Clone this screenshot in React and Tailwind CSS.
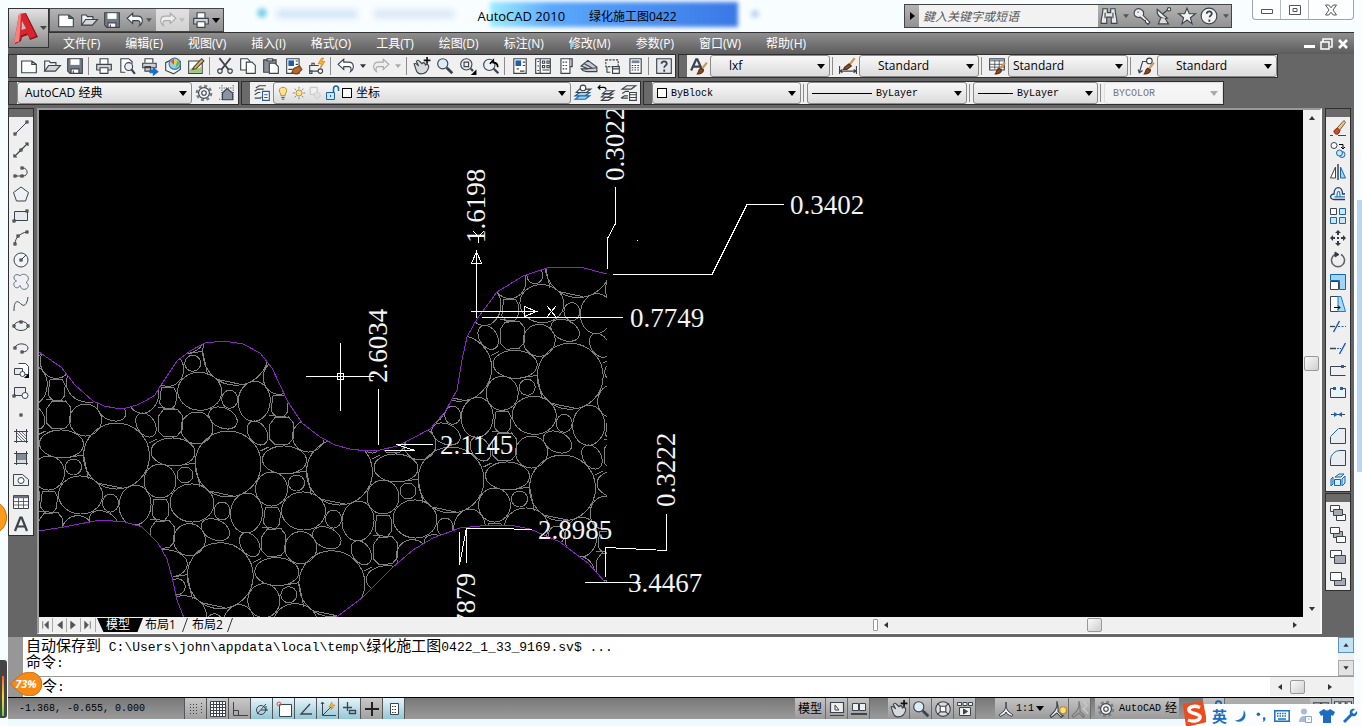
import clsx from 'clsx';

// 16x16 toolbar glyphs
const icons = {
  new: <path d="M1.500 3.500h9l4 3v7.500h-13zM10.500 3.500v3h4" fill="#fff" />,
  open: (
    <>
      <path d="M1.500 12.500v-9h4l1 1.500h5v2.500" fill="#f4f4f4" />
      <path d="M1.500 12.500l3.500-5h10.500l-4.500 5z" fill="#d4d6da" />
    </>
  ),
  save: (
    <>
      <path d="M1.500 1.500h13v13h-11l-2-2z" fill="#737b87" />
      <path d="M4 2h8v5H4z" fill="#fff" stroke="none" />
      <path d="M4.500 10.500h7v4h-7zM6.500 12v2" fill="#fff" />
    </>
  ),
  undo: <path d="M6 2L1 6.500l5 4.500V8.500h4.500c2 0 2.500 2 1.500 4.500 4-3 3-8.500-1.500-8.500H6z" fill="#fff" />,
  redo: <path d="M10 2l5 4.500L10 11V8.500H5.500c-2 0-2.500 2-1.500 4.500C0 10 1 4.500 5.500 4.500H10z" fill="#eee" stroke="#aaa" />,
  print: (
    <>
      <path d="M4.500 6V1.500h7V6" fill="#fff" />
      <path d="M1.500 6.500h13v5h-13z" fill="#cfd1d5" />
      <path d="M4.500 9.500h7v5h-7z" fill="#fff" />
    </>
  ),
  preview: (
    <>
      <path d="M12.500 6V4l-3-2.500h-7v12h4" fill="#fff" />
      <circle cx="9.500" cy="8.500" r="3.500" fill="#e4eef6" />
      <path d="M12 11l3 4" strokeWidth="2" />
    </>
  ),
  plot: (
    <>
      <path d="M3.500 5V1.500h7V5" fill="#fff" />
      <path d="M1.500 5.500h12v4h-12zM3.500 8.500h5v4h-5z" fill="#cfd1d5" />
      <path d="M8 11.500h3v-2l4 3.500-4 3v-2H8z" fill="#1c6fc4" stroke="#1c6fc4" />
    </>
  ),
  globe: (
    <>
      <path d="M1.500 5l6-3 7 2v7l-6 4-7-3z" fill="#f3f3f3" />
      <circle cx="9.500" cy="6" r="5" fill="#8fd0f2" stroke="#2c7dab" />
      <path d="M9 1l-3 3 3 3z" fill="#e24d3a" stroke="none" />
      <path d="M9 7V1.500l3.500 1.500L10 8z" fill="#f6c646" stroke="none" />
      <path d="M12 3l2 3-4 4z" fill="#63b357" stroke="none" />
    </>
  ),
  markup: (
    <>
      <path d="M1.500 3.500h12v11h-12z" fill="#fff" />
      <path d="M2 12c3-5 7 1 11-4v6H2z" fill="#9ec77a" stroke="none" />
      <path d="M6 9l7-7.500 2 2-7 7-3 .5z" fill="#f5b53a" />
    </>
  ),
  cut: (
    <>
      <path d="M3 1l8 10M13 1L5 11" strokeWidth="1.500" />
      <circle cx="3.500" cy="12.500" r="2" />
      <circle cx="12.500" cy="12.500" r="2" />
    </>
  ),
  copyclip: (
    <>
      <path d="M1.500 1.500h6l2 2v8h-8z" fill="#fff" />
      <path d="M6.500 4.500h5l3 3v7h-8z" fill="#fff" />
    </>
  ),
  paste: (
    <>
      <path d="M1.500 2.500h11v11h-11z" fill="#8b8f96" />
      <path d="M4.500 1.500h5v2h-5z" fill="#ddd" />
      <path d="M6.500 5.500h5l3 3v6h-8z" fill="#fff" />
    </>
  ),
  match: (
    <>
      <path d="M1.500 1.500h11v13h-11z" fill="#fff" />
      <path d="M3 3h5v5H3z" fill="#1c5fa8" stroke="none" />
      <path d="M9.500 3.500h2M9.500 6.500h2M3 11h4" />
      <path d="M8 10l5-2 2 3-4 4c-1 0-3 0-5-1z" fill="#b56a2c" stroke="#7a4219" />
    </>
  ),
  block: (
    <>
      <path d="M4.500 7.500h-3v5h8M4.500 7.500h5" />
      <circle cx="11" cy="12.500" r="2" fill="#fff" />
      <path d="M3.500 5.500h2v2h-2zM1.500 12.500h2v2h-2z" fill="#fff" />
      <path d="M12 1l-3 5h3l-1 4 4-6h-3l2-3z" fill="#ffb52e" stroke="#c97a12" strokeWidth=".6" />
    </>
  ),
  pan: (
    <>
      <path d="M1 6c2-1 3 1 4 2L3 4c1-2 2-1 3 0l2 2 1-1c1 0 2 1 2 2 2-1 3 0 3 2-1 4-3 6-7 6-4 0-4-3-6-9z" fill="#d7d9dc" />
      <path d="M12.500 0v6M9.500 3h6" strokeWidth="1.500" stroke="#111" />
    </>
  ),
  zoom: (
    <>
      <circle cx="6" cy="6" r="4.500" fill="#d9ecf8" />
      <path d="M9.500 9.500l5 5" strokeWidth="2.500" />
    </>
  ),
  zoomwin: (
    <>
      <circle cx="6.500" cy="6.500" r="5" fill="#eee" />
      <path d="M4.500 4.500h4v4h-4z" />
      <path d="M10.500 10.500l2 2" strokeWidth="2" />
      <path d="M15.500 11v5h-5z" fill="#000" stroke="none" />
    </>
  ),
  zoomprev: (
    <>
      <circle cx="6.500" cy="7" r="5" fill="#e8f2f8" />
      <path d="M7 6l3-3v2c3 0 4 2 4 4" stroke="#000" strokeWidth="1.500" />
      <path d="M10.500 10.500l4 4" strokeWidth="2" />
    </>
  ),
  props: (
    <>
      <path d="M2.500 1.500h11v13h-11z" fill="#fff" />
      <path d="M4 3h5v5H4z" fill="#1c5fa8" stroke="none" />
      <path d="M10.500 4.500h2M10.500 7.500h2M5 10.500h2M8 12.500h4" />
    </>
  ),
  center: (
    <>
      <path d="M1.500 1.500h13v13h-13zM5.500 1.500v13" fill="#fff" />
      <path d="M7.500 3.500h2v2h-2zM11.500 3.500h2v2h-2zM7.500 7.500h2v2h-2zM11.500 7.500h2v2h-2zM7.500 11.500h6M3 4h1.500M3 8h1.500M3 12h1.500" />
    </>
  ),
  palette: (
    <>
      <path d="M3.500 1.500h8v13h-8z" fill="#fff" />
      <path d="M11.500 1.500h2v7h-2" fill="#bbb" />
      <path d="M5 4.500h5M5 7.500h5M5 10.500h5" strokeDasharray="1.500 1" />
    </>
  ),
  sheet: (
    <>
      <path d="M1 8l6-5 8 6v4H6c-2 0-4-1-5-2.500h6z" fill="#c9ccd1" />
      <path d="M7 10.500l8-1M4 6l7 4" />
    </>
  ),
  cloud: (
    <>
      <path d="M2.500 2.500h11v6h-11z" strokeDasharray="2 1" />
      <path d="M3.500 8.500v5h3" />
      <path d="M8.500 8.500h6v6h-6zM8.500 10.500h6" fill="#fff" />
    </>
  ),
  calc: (
    <>
      <path d="M3.500 1.500h10v13h-10z" fill="#fff" />
      <path d="M5 3h7v2.500H5z" fill="#7b828d" stroke="none" />
      <path d="M5 7.500h7M5 9.500h7M5 11.500h7" strokeDasharray="1.500 1" />
    </>
  ),
  help: (
    <>
      <path d="M1.500 1.500h13v13h-13z" fill="#e3e6ea" />
      <path d="M5.800 6c0-3 4.700-2.500 4.700 0 0 1.500-2.300 1.500-2.300 3.500M8.200 11v2" strokeWidth="1.600" />
    </>
  ),
  textstyle: (
    <>
      <path d="M1 12L5.500 2h1L11 12M3 8.500h6" strokeWidth="2" />
      <Brush />
    </>
  ),
  dimstyle: (
    <>
      <path d="M.5 8v7M15.500 8v7M1 12.500h14M3 11l-2 1.500L3 14M13 11l2 1.500-2 1.500" />
      <path d="M5 9l4-3 2 2-4 3H4z" fill="#8d4a1f" stroke="#5c2e12" />
      <path d="M10 6l4-5" stroke="#c79a5a" strokeWidth="2" />
    </>
  ),
  tablestyle: (
    <>
      <path d="M1.500 1.500h13v10h-13z" fill="#fff" />
      <path d="M2 3h12" strokeWidth="2" stroke="#8a909a" />
      <path d="M1.500 6.500h13M1.500 9h13M6 3v8M10 3v8" strokeWidth=".7" />
      <Brush />
    </>
  ),
  leaderstyle: (
    <>
      <path d="M2 14l3-10h4M1 11l1 3 3-2" />
      <circle cx="11" cy="3.500" r="2.500" fill="#fff" />
      <Brush />
    </>
  ),
  gear: (
    <>
      <circle cx="8" cy="8" r="6.300" strokeDasharray="2.700 2.240" strokeWidth="2.200" stroke="#7c8087" />
      <circle cx="8" cy="8" r="4.800" fill="#f2f2f2" />
      <circle cx="8" cy="8" r="2" fill="#fff" />
    </>
  ),
  workspace: (
    <>
      <path d="M1 3.500h14M1 13.500h14M3.500 1v14M13.500 1v14" strokeDasharray="1 1" />
      <path d="M4 8l4-4 5 4v6H4z" fill="#8895a5" />
    </>
  ),
  layers: (
    <>
      <path d="M2.500 3.500l3-2h6M1.500 6.500l3-2h5M1.500 9.500l3-2h2M1.500 12.500h5l1-1" />
      <path d="M8.500 6.500h6v8h-6zM10 9.500h3M10 12h3" fill="#fff" stroke="#2d5a92" />
    </>
  ),
  bulb: (
    <>
      <path d="M8 1.500c-5 0-5 5-2.500 7.500v2h5V9C13 6.500 13 1.500 8 1.500z" fill="#ffe28a" stroke="#a58a3c" />
      <path d="M6 13h4M6.500 15h3" />
    </>
  ),
  sun: (
    <>
      <circle cx="8" cy="8" r="3.500" fill="#ffe28a" stroke="#a58a3c" />
      <path d="M8 1v2M8 13v2M1 8h2M13 8h2M3 3l1.500 1.500M11.500 11.500L13 13M3 13l1.500-1.500M11.500 4.500L13 3" stroke="#777" />
    </>
  ),
  vpfreeze: (
    <>
      <path d="M2.500 1.500h8v8h-8z" stroke="#bbb" fill="#f0f0f0" />
      <circle cx="10.500" cy="10.500" r="3.500" stroke="#bbb" fill="#e2e2e2" strokeDasharray="2 1" />
    </>
  ),
  unlock: (
    <>
      <path d="M9.500 8V4c0-4 5-4 5 0v2" stroke="#1766ad" strokeWidth="1.500" />
      <path d="M2.500 7.500h8v7h-8z" fill="#cfe6f6" stroke="#1766ad" />
      <path d="M6.500 10v2" stroke="#1766ad" />
    </>
  ),
  laycur: (
    <>
      <path d="M1 13.500l4-3h9l-4 3zM1 10.500l4-3h9l-4 3z" fill="#9fd2f1" stroke="#1766ad" />
      <path d="M2 7.500l3-3h10l-4 3z" fill="#fff" />
      <circle cx="8" cy="3.500" r="2.500" fill="#fff" />
    </>
  ),
  layprev: (
    <>
      <path d="M4 14.500l3-2.500h7l-4 2.500zM4 11.500l3-2.500h7l-4 2.500zM5 8.500l3-2.500h7l-4 2.500z" fill="#f3f3f3" />
      <path d="M1 3h5c2 0 2 1 2 2M3 1L1 3l2 2" stroke="#000" />
    </>
  ),
  laystate: (
    <>
      <path d="M2 4.500l4-3h8l-4 3zM2 8.500l3-2h3M1 12.500l3-2h3M1 12.500h6" />
      <path d="M8.500 7.500h6v7h-6zM8.500 9.500h6M8.500 12h6" fill="#fff" />
    </>
  ),

  // draw
  line: <><path d="M2 14L14 2" /><Grip x="1" y="13" /><Grip x="13" y="1" /></>,
  xline: <><path d="M1 15L15 1M1 12v3h3M12 1h3v3" strokeWidth="1.200" /><Grip x="7" y="7" /></>,
  pline: <><path d="M2 12h8c6 0 5-8 0-8" /><Grip x="1" y="11" /><Grip x="8" y="11" /><Grip x="8" y="3" /></>,
  polygon: <path d="M8 1l7.500 5.500L12.500 15h-9L.5 6.500z" fill="#f0f1f5" />,
  rect: <><path d="M1.500 3.500h13v9h-13z" fill="#e6e8f0" /><Grip x="13" y="2" /><Grip x="0" y="12" /></>,
  arc: <><path d="M2 14c0-6 5-11 12-12" /><Grip x="1" y="13" /><Grip x="4" y="5" /><Grip x="13" y="1" /></>,
  circle: <><circle cx="8" cy="8" r="7" fill="#f2f4f7" /><path d="M8 8l5-5" /><Grip x="7" y="7" /></>,
  revcloud: (
    <path d="M7 2C5-.5.500.5 1 4c.3 2 1.500 2.500 2.500 3C1 8 0 10 1.500 12.500 3 14.500 6 14 7 11.500c1 3.500 3.500 4.500 6 3.500 3-1.500 3-5 0-6.500C15.500 7 16 4 14.500 2 12.500 0 8.500-.5 7 2z" fill="#eef0f6" stroke="#666d78" />
  ),
  spline: <path d="M1 15C1 3 5 5 8 8s6 1 7-7" />,
  ellipse: <><ellipse cx="8" cy="8" rx="7" ry="4.500" fill="#eef0f4" /><Grip x="0" y="7" /><Grip x="14" y="7" /><Grip x="7" y="3" /></>,
  earc: <><path d="M2 8C3 2 15 3 15 8c0 3-3 4-6 4" /><Grip x="1" y="7" /><Grip x="8" y="11" /></>,
  insert: (
    <>
      <path d="M5.500 1.500h7l3 3v8h-6" fill="#fff" />
      <path d="M1.500 6.500h8v6h-8z" fill="#e8eaee" />
      <circle cx="9.500" cy="12" r="2.500" fill="#fff" />
      <path d="M16 11v5h-5z" fill="#000" stroke="none" />
    </>
  ),
  mkblock: <><path d="M1.500 3.500h11v8h-11z" fill="#e8eaee" /><circle cx="12" cy="11.500" r="3" fill="#fff" /><Grip x="0" y="11" /></>,
  point: <Grip x="7" y="8" />,
  hatch: (
    <>
      <path d="M1 3.500h14M1 13.500h14M3.500 1v14M13.500 1v14" />
      <path d="M4 8l5 5M4 5l8 8M6 4l7 7M9 4l4 4" strokeWidth=".7" />
    </>
  ),
  gradient: (
    <>
      <path d="M4 4h9v9H4z" fill="#858b95" stroke="none" />
      <path d="M4 10h9v3H4z" fill="#d7dae0" stroke="none" />
      <path d="M1 3.500h14M1 13.500h14M3.500 1v14M13.500 1v14" />
    </>
  ),
  region: <><path d="M.5 2.500h9l6 5v6H.5z" fill="#eef0f4" /><circle cx="8" cy="8.500" r="3" fill="#fff" /></>,
  table: (
    <>
      <path d="M.5 1.500h15v13H.5z" fill="#fff" />
      <path d="M1 3h14" strokeWidth="2.500" stroke="#6a717c" />
      <path d="M.5 7.500h15M.5 11h15M5.500 4v10M10.500 4v10" strokeWidth=".8" />
    </>
  ),
  mtext: <path d="M2 15L7.300 1.500h1.400L14 15M4 10.500h8" strokeWidth="2.200" />,

  // modify
  erase: (
    <>
      <path d="M0 15.500h3M8 15.500h8" />
      <path d="M7 8l7-7.500 1.500 2L9 11z" fill="#e9c991" stroke="#7b5a2b" />
      <path d="M4.500 10l3-2 2.500 2.500-1 2.500c-2 3-6.500 0-4.500-3z" fill="#c94a2d" stroke="#8b2c17" />
    </>
  ),
  copy: (
    <>
      <circle cx="4" cy="3.500" r="3" fill="#fff" />
      <path d="M9 2.500h4v4M11 5l2 2 2-2" stroke="#000" />
      <circle cx="12" cy="12.500" r="3" fill="#cbe8fa" stroke="#1766ad" />
      <circle cx="9.500" cy="11" r="3" fill="#cbe8fa" stroke="#1766ad" />
    </>
  ),
  mirror: (
    <>
      <path d="M5.500 3v11h-5z" fill="#fff" />
      <path d="M10.500 3v11h5z" fill="#9fd6f7" stroke="#1766ad" />
      <path d="M8 0v16" strokeWidth="1.500" />
    </>
  ),
  offset: (
    <>
      <path d="M15 13.500H4c-4.500 0-4.500-5.500 0-5.500C4-.5 12.500-.5 12.500 8H15" stroke="#1b3f6b" strokeWidth="1.300" />
      <path d="M15 10.800H4.500M7 10.500c0-7 3-7 3 0" stroke="#1f7cc6" strokeWidth="1.200" />
    </>
  ),
  array: (
    <>
      <path d="M.5.5h6v6h-6z" fill="#fff" />
      <path d="M9.500.5h6v6h-6zM.5 9.500h6v6h-6zM9.500 9.500h6v6h-6z" fill="#cbe8fa" stroke="#1766ad" />
    </>
  ),
  move: (
    <path d="M8 0l3 3H9v2H7V3H5zM8 16l3-3H9v-2H7v2H5zM0 8l3-3v2h2v2H3v2zM16 8l-3-3v2h-2v2h2v2zM7 7h2v2H7z" fill="#333a44" stroke="none" />
  ),
  rotate: <><path d="M5 2.500A6.500 6.500 0 1 0 11 2.500" strokeWidth="1.500" stroke="#5c6169" /><path d="M5 0l4 2.500L5 5z" fill="#333" /></>,
  scale: (
    <>
      <path d="M.5.5h15v15h-6v-9h-9z" fill="#9fd6f7" stroke="#1766ad" />
      <path d="M.5 7.500h8v8h-8z" fill="#fff" />
    </>
  ),
  stretch: (
    <>
      <path d="M8 .5H.5v15H8" fill="#fff" />
      <path d="M8 .5h3l4.500 15H8z" fill="#a9dbf8" stroke="#1f7cc6" />
      <path d="M4 11.500h6M8 9.500l2 2-2 2" stroke="#000" />
    </>
  ),
  trim: <><path d="M0 8.500h5" strokeWidth="1.300" /><path d="M8 8.500h8" strokeDasharray="2 1.500" stroke="#1766ad" /><path d="M3.500 14L9.500 3" stroke="#1c4fc0" strokeWidth="1.400" /></>,
  extend: <><path d="M0 8.500h6" strokeWidth="1.500" /><path d="M7 8.500h4" strokeDasharray="2 1" stroke="#1766ad" /><path d="M9.500 14L15.500 3" stroke="#1c4fc0" strokeWidth="1.400" /></>,
  breakpt: <><path d="M16 4.500H.5v9h15" /><path d="M11 3h3v3h-3z" fill="#1766ad" stroke="none" /></>,
  breakk: <><path d="M4 4.500H.5v9h15v-9H12" fill="#eaf4fb" /><path d="M3 3h3v3H3zM10 3h3v3h-3z" fill="#1766ad" stroke="none" /></>,
  join: <><path d="M1 8.500h14" /><path d="M4 6l4 2.500L4 11zM12 6L8 8.500l4 2.500z" fill="#1766ad" stroke="none" /></>,
  chamfer: <><path d="M9 .5h6.500v15H.5V9" fill="#e9ecf0" /><path d="M.5 8.500l8-8" stroke="#1766ad" /></>,
  fillet: <><path d="M10 .5h5.500v15H.5V10" fill="#e9ecf0" /><path d="M.5 10C.5 5 5 .5 10 .5" stroke="#1766ad" /></>,
  explode: (
    <>
      <path d="M5 5l4-3h5l-3 3zM1 7l2-2v7l-2 2zM12 7l3-3v7l-3 3z" fill="#bfe5fa" stroke="#1766ad" />
      <path d="M4.500 7.500h6v6h-6z" fill="#d8effc" stroke="#1766ad" />
    </>
  ),
  front: <><path d="M.5.5h9v6h-9zM6.500 9.500h9v6h-9z" fill="#fff" /><path d="M3.500 4.500h9v6h-9z" fill="#a5a9b2" /></>,
  back: <><path d="M3.500 4.500h9v6h-9z" fill="#a5a9b2" /><path d="M.5.5h9v6h-9zM6.500 9.500h9v6h-9z" fill="#fff" /></>,
  above: <><path d="M.5 1.500h11v7H.5z" fill="#fff" /><path d="M4.500 6.500h11v8h-11z" fill="#a5a9b2" /></>,
  under: <><path d="M4.500 7.500h11v7h-11z" fill="#a5a9b2" /><path d="M.5 1.500h11v8H.5z" fill="#fff" /></>,

  // status bar
  snap: <path d="M2 3.500h9M2 6.500h9M2 9.500h9M2 12.500h9M13.500 2v12" strokeDasharray="1 2" />,
  grid: <><path d="M.5.5h15v15H.5z" fill="#fff" /><path d="M.5 3.500h15M.5 6.500h15M.5 9.500h15M.5 12.500h15M3.500 0v16M6.500 0v16M9.500 0v16M12.500 0v16" /></>,
  ortho: <path d="M1.500 1v13.500H16M1.500 9.500h5v5" />,
  polar: <><circle cx="7" cy="9" r="4.500" /><path d="M3 13L12 3M7 9h7M12 5v5" /></>,
  osnap: <><path d="M3.500 3.500h12v12h-12z" fill="#fff" /><circle cx="3" cy="3" r="2" stroke="#e2572b" /></>,
  otrack: <path d="M12 3L3 13h11" strokeWidth="1.300" />,
  ducs: <><path d="M2.500 1v13.500H16M1 3l1.500-2L4 3M3 14L12 5" /><path d="M12 1L9 6h3l-1 3 4-5h-3z" fill="#ffb52e" stroke="#c97a12" strokeWidth=".6" /></>,
  dyn: <path d="M5.500 1v9M1 6.500h9M7.500 9.500h6v3h-6z" strokeWidth="1.300" />,
  lwt: <path d="M8 1v14M1 8h14" strokeWidth="2" stroke="#222" />,
  qp: <><path d="M4.500 2.500h8v11h-8z" fill="#fff" /><path d="M6 5.500h5M6 8.500h5M6 11.500h5" strokeDasharray="1.500 1" /></>,
  paper: <><path d="M1.500 1.500h13v10h-13zM1 14.500h14" fill="#eee" strokeWidth="1.200" /><path d="M6 4v5h4z" /></>,
  views: <><path d="M1.500 2.500h6v7h-6zM8.500 2.500h6v7h-6z" fill="#eee" /><path d="M0 13h16" strokeWidth="2" /></>,
  wheel: <><circle cx="8" cy="8" r="6.500" fill="#ddd" /><path d="M5.500 5.500h5v5h-5zM3 3l2.500 2.500M13 3l-2.500 2.500M3 13l2.500-2.500M13 13l-2.500-2.500" fill="#fff" /></>,
  motion: <><path d="M.5 1.500h4v3h-4zM6 1.500h4v3H6zM11.500 1.500h4v3h-4zM2.500 6.500h11v8h-11z" fill="#eee" /><path d="M6.500 8v5l4-2.500z" fill="#444" /></>,
  anno: <path d="M8 1v5l-2 4-5 4 1 1.500 5-2.500 1-2 1 2 5 2.500 1-1.500-5-4-2-4V1z" fill="#f1f1f1" />,
  annobulb: <><path d="M7 1v5l-2 4-4 4 1 1.500 5-4 4 4 1-1.500-4-4V6z" fill="#f1f1f1" /><circle cx="12.500" cy="9" r="3" fill="#ffdf70" stroke="#b98a20" /><path d="M11.500 14h2" /></>,
  annoauto: <><path d="M7 1v5l-2 4-4 4 1 1.500 5-4 4 4 1-1.500-4-4V6z" fill="#aaa" stroke="#777" /><path d="M11 1l3 4-3 3 4 4" stroke="#ccc" /></>,

  // info center
  binoc: <path d="M1 12L2.500 4V1.500h4V5h3V1.500h4V4L15 12v2.500h-5V9H6v5.500H1zM4.500 5v5M11.500 5v5" fill="#e8e8e8" />,
  key: <path d="M9 7.500l6 6-1.500 2-2.500-2v-1.500l-1.500-.5L6.500 9C3.500 10 .5 8 1 5 1.500 2 4.500.5 7 2s3 3.500 2 5.500zM4 4.500h1" fill="#eee" />,
  dish: <><path d="M2 2c-1 6 4 9 9 8zM7 6l5-4" fill="#eee" /><path d="M5 10l-2 5h9l-3-5" fill="#ddd" /><circle cx="12.500" cy="2" r="1.500" fill="#fff" /></>,
  star: <path d="M8 1l2 5h5.500l-4.500 3.500L12.500 15 8 11.500 3.500 15 5 9.500.5 6H6z" fill="#f4f4f4" />,
  helpround: <><circle cx="8" cy="8" r="7" fill="#f4f4f4" /><path d="M6 6c0-3 4.500-2.500 4.500 0 0 1.500-2 1.500-2 3M8.300 11v2" strokeWidth="1.600" /></>,
};

function Grip({ x, y }) {
  return <rect x={x} y={y} width="2" height="2" fill="#fff" stroke="#222" />;
}

function Brush() {
  return (
    <>
      <path d="M15 5l-4 5" stroke="#c79a5a" strokeWidth="2" />
      <path d="M6.500 15c1-1 1-4 3-5l2.500 1.500c0 2-3 4-5.500 3.500z" fill="#8d4a1f" stroke="#5c2e12" />
    </>
  );
}

function Icon({ name, className = 'size-[18px]' }) {
  return (
    <svg viewBox="0 0 16 16" className={clsx('shrink-0 overflow-visible', className)} fill="none" stroke="#3d434c" strokeWidth="1">
      {icons[name]}
    </svg>
  );
}

function Tool({ name, icon, className = 'h-[22px] w-[23px]' }) {
  return (
    <button type="button" aria-label={name} className={clsx('flex shrink-0 items-center justify-center', className)}>
      <Icon name={name} className={icon} />
    </button>
  );
}

function Caret({ className = 'h-[5px] w-2 text-black' }) {
  return (
    <svg viewBox="0 0 8 5" className={clsx('shrink-0', className)} fill="currentColor">
      <path d="M0 0h8L4 5z" />
    </svg>
  );
}

const Sep = () => <div className="mr-[3px] ml-0.5 h-[18px] w-px shrink-0 bg-[#8c8c8c]" />;

const dots = 'bg-[radial-gradient(#1c1c1c_35%,transparent_40%)] bg-[length:2px_2px]';

function GripV() {
  return (
    <div className="flex w-2 shrink-0 items-center justify-center self-stretch bg-[#6a6a6a]">
      <div className={clsx('h-4 w-1', dots)} />
    </div>
  );
}

function GripH() {
  return (
    <div className="flex h-2 items-center justify-center bg-[#6a6a6a]">
      <div className={clsx('h-1 w-3.5', dots)} />
    </div>
  );
}

function Combo({ label, value, className, pad = 'pl-[18px]', mono, disabled, children }) {
  return (
    <label
      className={clsx(
        'relative flex h-[22px] shrink-0 items-center rounded-[3px] border bg-gradient-to-b',
        disabled ? 'border-[#ddd] from-[#f6f6f6] to-[#f3f3f3]' : 'border-[#8a8a8a] from-[#f8f8f8] to-[#dcdcdc]',
        className
      )}
    >
      {children}
      <select
        aria-label={label}
        disabled={disabled}
        defaultValue={value}
        className={clsx(
          'h-full w-full min-w-0 appearance-none bg-transparent outline-none',
          pad,
          mono ? 'font-["Liberation_Mono",monospace] text-[10px]' : 'text-[12px]',
          disabled ? 'text-[#777]' : 'text-black'
        )}
      >
        <option>{value}</option>
      </select>
      <span className="pointer-events-none absolute right-1">
        <Caret className={clsx('h-[5px] w-2', disabled ? 'text-[#aaa]' : 'text-black')} />
      </span>
    </label>
  );
}

const menus = ['文件(F)', '编辑(E)', '视图(V)', '插入(I)', '格式(O)', '工具(T)', '绘图(D)', '标注(N)', '修改(M)', '参数(P)', '窗口(W)', '帮助(H)'];

function TitleBar() {
  const smallCaret = 'h-1 w-1.5 text-[#555]';
  return (
    <div className="relative flex h-8 items-start">
      <div className="pointer-events-none absolute inset-0 overflow-hidden">
        <div className="absolute top-2 left-52 size-2.5 rounded-full bg-[#7fd3ea] blur-[2px]" />
        <div className="absolute top-2.5 left-[228px] h-2 w-20 bg-[#cfe2f8] blur-[3px]" />
        <div className="absolute top-2.5 left-[325px] h-2 w-20 bg-[#d8e6f6] blur-[3px]" />
        <div className="absolute top-0.5 left-[441px] h-[25px] w-[248px] bg-gradient-to-r from-[#9eecff] via-[#5aa8fb] via-25% to-[#3a78e6] blur-[2px]" />
        <div className="absolute top-2.5 left-[702px] size-2 rounded-full bg-[#bcd6f4] blur-[2px]" />
      </div>

      <div className="relative mt-2 flex h-6 w-[175px] shrink-0 items-center border border-[#444] bg-gradient-to-b from-[#b4b4b4] to-[#8e8e8e] pl-1">
        <Tool name="new" />
        <Tool name="open" />
        <Tool name="save" />
        <Tool name="undo" />
        <Caret className={smallCaret} />
        <div className="ml-1 flex h-full items-center bg-white/60 pr-1">
          <Tool name="redo" />
          <Caret className="h-1 w-1.5 text-[#bbb]" />
        </div>
        <Tool name="print" />
        <Caret />
      </div>

      <h1 className="relative flex flex-1 items-baseline justify-center gap-6 pt-1.5 pl-[26px] text-[12px] leading-5 whitespace-nowrap text-black">
        <span className="text-[13px]">AutoCAD 2010</span>
        <span>绿化施工图0422</span>
      </h1>

      <div className="relative mt-1 flex h-6 w-[328px] shrink-0 items-center border border-[#444] bg-gradient-to-b from-[#b4b4b4] to-[#929292]">
        <button type="button" aria-label="展开" className="flex h-full w-3.5 items-center justify-center">
          <svg viewBox="0 0 5 8" className="h-2 w-[5px]"><path d="M0 0l5 4-5 4z" /></svg>
        </button>
        <input
          aria-label="搜索"
          placeholder="鍵入关键字或短语"
          className="h-full w-[179px] bg-[#f2f2f2] px-1 text-[12px] italic outline-none placeholder:text-[#555]"
        />
        <div className="flex flex-1 items-center justify-around">
          <Icon name="binoc" />
          <Caret className={smallCaret} />
          <Icon name="key" />
          <Icon name="dish" />
          <Icon name="star" />
          <Icon name="helpround" />
          <Caret className={smallCaret} />
        </div>
      </div>

      <div className="relative ml-5 flex h-5 w-[102px] shrink-0 divide-x divide-[#b5bcc2] rounded-b-[4px] border border-t-0 border-[#9aa3aa] bg-white/60">
        <button type="button" aria-label="最小化" className="flex w-7 items-center justify-center">
          <svg viewBox="0 0 12 12" className="size-3"><path d="M.5 5.500h11v4H.5z" fill="#fff" stroke="#555" /></svg>
        </button>
        <button type="button" aria-label="还原" className="flex w-7 items-center justify-center">
          <svg viewBox="0 0 12 12" className="size-3"><path d="M.5 1.500h11v9H.5zM4 4.500h4v3H4z" fill="#fff" stroke="#555" /></svg>
        </button>
        <button type="button" aria-label="关闭" className="flex flex-1 items-center justify-center">
          <svg viewBox="0 0 12 12" className="size-3">
            <path d="M.5 1h3.300L6 3.800 8.200 1h3.300L8 6l3.500 5H8.200L6 8.200 3.800 11H.5L4 6z" fill="#fff" stroke="#555" />
          </svg>
        </button>
      </div>
    </div>
  );
}

function MenuBar() {
  return (
    <nav className="flex h-[22px] items-center border-t border-[#333] bg-gradient-to-b from-[#8f8f8f] to-[#5c5c5c] pr-[5px] pl-[14px]">
      <div className="flex flex-1 gap-[25px] text-[12px] leading-4 whitespace-nowrap text-white">
        {menus.map((m) => (
          <button key={m} type="button">{m}</button>
        ))}
      </div>
      <svg viewBox="0 0 46 12" className="h-3 w-[46px]" fill="none" stroke="#fff" strokeWidth="2">
        <path d="M1 8.500h11" strokeWidth="3" />
        <path d="M20 4V1h9v8h-2M18 4h8v7h-8z" strokeWidth="1.500" />
        <path d="M36 2l8 8M44 2l-8 8" strokeWidth="2.500" />
      </svg>
    </nav>
  );
}

function Header() {
  return (
    <header className="grid grid-cols-[41px_minmax(0,1fr)] bg-[linear-gradient(transparent_32px,#333_32px,#333_33px,#8f8f8f_33px,#5c5c5c)]">
      <button
        type="button"
        aria-label="应用程序菜单"
        className="mt-2 flex h-10 w-[41px] items-center justify-center self-start border border-[#333] bg-gradient-to-b from-[#e2e2e2] to-[#8c8c8c]"
      >
        <svg viewBox="0 0 38 38" className="size-[38px]">
          <path d="M5 35L9 6l7-2 12 24-8 3-2-5-6 2-1 4z" fill="#8f1118" />
          <path d="M4 34L9 5l6-1 11 23-6 2.500-3-5-6 2-1 5z" fill="#d9262e" />
          <path d="M4 34L9 5l2-.5-1 18-1 10z" fill="#f58083" />
          <path d="M11.500 21L12 12l4 7.500z" fill="#c9bcbc" />
          <path d="M30 17h7l-3.500 4z" fill="#444" />
        </svg>
      </button>
      <div className="min-w-0">
        <TitleBar />
        <MenuBar />
      </div>
    </header>
  );
}

function Toolbars() {
  const bar = 'flex h-6 shrink-0 items-center border border-[#2f2f2f] bg-[#f0f0f0]';
  return (
    <div className="flex flex-col gap-[3px] pb-[3px]">
      <div className="flex gap-0.5">
        <div className={bar}>
          <GripV />
          {['new', 'open', 'save'].map((n) => <Tool key={n} name={n} />)}
          <Sep />
          {['print', 'preview', 'plot', 'globe', 'markup'].map((n) => <Tool key={n} name={n} />)}
          <Sep />
          {['cut', 'copyclip', 'paste', 'match', 'block'].map((n) => <Tool key={n} name={n} />)}
          <Sep />
          <Tool name="undo" />
          <Caret className="mx-[3px] h-1 w-1.5 text-[#333]" />
          <Tool name="redo" />
          <Caret className="mx-[3px] h-1 w-1.5 text-[#aaa]" />
          <Sep />
          {['pan', 'zoom', 'zoomwin', 'zoomprev'].map((n) => <Tool key={n} name={n} />)}
          <Sep />
          {['props', 'center', 'palette', 'sheet', 'cloud', 'calc'].map((n) => <Tool key={n} name={n} />)}
          <Sep />
          <Tool name="help" />
        </div>
        <div className={bar}>
          <GripV />
          <Tool name="textstyle" />
          <Combo label="文字样式" value="lxf" className="w-[120px]" />
          <Sep />
          <Tool name="dimstyle" />
          <Combo label="标注样式" value="Standard" className="w-[120px]" />
          <Sep />
          <Tool name="tablestyle" />
          <Combo label="表格样式" value="Standard" pad="pl-1" className="w-[120px]" />
          <Sep />
          <Tool name="leaderstyle" />
          <Combo label="多重引线样式" value="Standard" className="w-[120px]" />
        </div>
      </div>

      <div className="flex gap-0.5">
        <div className={bar}>
          <GripV />
          <Combo label="工作空间" value="AutoCAD 经典" pad="pl-[7px]" className="w-[175px]" />
          <Tool name="gear" />
          <Tool name="workspace" />
        </div>
        <div className={bar}>
          <GripV />
          <Tool name="layers" />
          <Combo label="图层" value="坐标" pad="pl-1" className="w-[298px]">
            <span className="flex shrink-0 items-center gap-0.5 pl-0.5">
              <Icon name="bulb" className="size-3.5" />
              <Icon name="sun" className="size-3.5" />
              <Icon name="vpfreeze" className="size-3.5" />
              <Icon name="unlock" className="size-4" />
              <span className="size-2.5 border border-black bg-white" />
            </span>
          </Combo>
          <Tool name="laycur" />
          <Tool name="layprev" />
          <Tool name="laystate" />
        </div>
        <div className={bar}>
          <GripV />
          <Combo label="颜色" value="ByBlock" mono pad="pl-1" className="w-[149px]">
            <span className="ml-1 size-2.5 shrink-0 border border-black bg-white" />
          </Combo>
          <Sep />
          <Combo label="线型" value="ByLayer" mono pad="pl-1" className="w-[160px]">
            <span className="ml-1 h-px w-[60px] shrink-0 bg-black" />
          </Combo>
          <Sep />
          <Combo label="线宽" value="ByLayer" mono pad="pl-1" className="w-[125px]">
            <span className="ml-1 h-px w-[35px] shrink-0 bg-black" />
          </Combo>
          <Sep />
          <Combo label="打印样式" value="BYCOLOR" mono disabled pad="pl-2" className="w-[119px]" />
        </div>
      </div>
    </div>
  );
}

const drawTools = ['line', 'xline', 'pline', 'polygon', 'rect', 'arc', 'circle', 'revcloud', 'spline', 'ellipse', 'earc', 'insert', 'mkblock', 'point', 'hatch', 'gradient', 'region', 'table', 'mtext'];
const modifyTools = ['erase', 'copy', 'mirror', 'offset', 'array', 'move', 'rotate', 'scale', 'stretch', 'trim', 'extend', 'breakpt', 'breakk', 'join', 'chamfer', 'fillet', 'explode'];
const orderTools = ['front', 'back', 'above', 'under'];

function SideBar({ tools }) {
  return (
    <div className="flex w-[26px] flex-col border border-[#2f2f2f] bg-[#efefef]">
      <GripH />
      {tools.map((n) => <Tool key={n} name={n} icon="size-4" className="h-[22px] w-6" />)}
    </div>
  );
}

// one cell of the gravel hatch: cx, cy, rx, ry, rotation
const stones = [
  [228, 464, 33, 33, 0],
  [173, 452, 22, 14, 2],
  [197, 428, 16, 16, 0],
  [146, 425, 9, 13, -32],
  [223, 418, 15, 10, 25],
  [160, 481, 16, 17, 0],
  [185, 475, 8, 8, 0],
  [192, 503, 22, 19, 4],
  [135, 505, 16, 20, 4],
  [222, 511, 8, 9, 0],
];

function GravelCell() {
  return (
    <>
      {stones.map(([cx, cy, rx, ry, rot]) => (
        <ellipse key={`${cx}-${cy}`} cx={cx} cy={cy} rx={rx} ry={ry} transform={`rotate(${rot} ${cx} ${cy})`} />
      ))}
      <path d="M163 410l14-1 5 6v15l-5 6-13 1-6-6v-14z" />
      <path d="M154 499l12 0 3 6-1 11-4 5h-7l-5-6 1-10z" />
      <path d="M149 443l8-4M195 463l5 24M209 491l24 5M150 519l20 2M176 466l19-3" />
    </>
  );
}

const cells = [];
for (let i = -2; i <= 4; i++) {
  for (let j = -2; j <= 2; j++) cells.push([i * 111.500 - j * 7.700, i * 8 + j * 111.700]);
}

const topEdge = '39,352 61,367 75,385 93,401 104,406 115,408 126,408 137,405 147,400 155,395 159,388 177,361 190,351 205,343 224,341 243,344 260,353 272,368 288,402 302,423 320,437 335,445 350,449 367,451 380,450 397,446 413,438 430,429 445,412 457,390 462,360 467,337 477,319 497,292 523,276 550,267 580,267 607,274';
const leftEdge = '39,531 64,527 100,520 125,522 142,527 158,543 167,559 172,577 177,600 184,618';
const rightEdge = '335,618 362,598 393,567 413,550 433,538 460,528 490,525 510,525 530,529 560,542 577,555 588,563 605,582';
const reversed = (pts) => pts.split(' ').reverse().join(' ');

const dims = [
  ['0.3402', 790, 214, 0],
  ['0.7749', 630, 327, 0],
  ['2.1145', 440, 454, 0],
  ['2.8985', 538, 539, 0],
  ['3.4467', 628, 592, 0],
  ['2.6034', 387, 383, -90],
  ['1.6198', 485, 243, -90],
  ['0.3022', 624, 181, -90],
  ['0.3222', 675, 507, -90],
  ['7879', 475, 627, -90],
];

function Drawing() {
  return (
    <svg className="block h-full w-full" fill="none">
      <defs>
        <clipPath id="bed">
          <polygon points={`${topEdge} 607,582 ${reversed(rightEdge)} ${reversed(leftEdge)}`} />
        </clipPath>
      </defs>
      <g transform="translate(-39 -110)" shapeRendering="crispEdges">
        <g clipPath="url(#bed)" stroke="#808080">
          {cells.map(([x, y]) => (
            <g key={`${x}_${y}`} transform={`translate(${x} ${y})`}>
              <GravelCell />
            </g>
          ))}
        </g>
        <g stroke="#8b22c2">
          <polyline points={topEdge} />
          <polyline points={leftEdge} />
          <polyline points={rightEdge} />
        </g>
        <g stroke="#fff">
          {/* leaders */}
          <path d="M607.500 269V238.500l8-15V187" />
          <path d="M613 274.500h99l35-70h37" />
          <path d="M482 317.500h141" />
          <path d="M378.500 389v56" />
          <path d="M433 444.500h-37l19 6h-30" />
          <path d="M459.500 532v33l7-37v35M466 528.500h30l36 1" />
          <path d="M605.500 577v-29.500l61 3V514" />
          <path d="M585 582.500h56" />
          <path d="M637 240.500h1" />
          {/* UCS icon */}
          <path d="M476.500 318v-67M471 311.500h65" />
          <path d="M471.500 263.500h10l-5-12zM524.500 306.500v10l12-5z" />
          <path d="M547 306l9 11M556 306l-9 11M473 231l5.500 6 5.500-6M478.500 237v6" />
          {/* crosshair */}
          <path d="M306 376.500h68M340.500 343v68M337.500 373.500h6v6h-6z" />
        </g>
        <g fill="#f4f4f4" shapeRendering="auto" className='font-["Liberation_Serif",serif] text-[27px]'>
          {dims.map(([t, x, y, r]) => (
            <text key={t} transform={`translate(${x} ${y}) rotate(${r})`}>{t}</text>
          ))}
        </g>
      </g>
    </svg>
  );
}

function Arrow({ dir, className = 'size-4' }) {
  const d = { up: 'M5 10l3-4 3 4z', down: 'M5 6l3 4 3-4z', left: 'M10 5L6 8l4 3z', right: 'M6 5l4 3-4 3z' }[dir];
  return (
    <button type="button" aria-label={dir} className={clsx('flex shrink-0 items-center justify-center', className)}>
      <svg viewBox="0 0 16 16" className="size-4"><path d={d} fill="#333" /></svg>
    </button>
  );
}

const thumb = 'shrink-0 rounded-[2px] border border-[#999] bg-gradient-to-br from-[#fafafa] to-[#cfcfcf]';

function Slash() {
  return (
    <svg viewBox="0 0 6 14" className="h-3.5 w-1.5 shrink-0"><path d="M.5 14L5.500 0" stroke="#333" /></svg>
  );
}

function SheetTabs() {
  return (
    <div className="flex h-4 items-center bg-[#f0f0f0]">
      <div className="flex h-3.5 divide-x divide-[#aaa] border-r border-[#aaa]">
        {['M4 3v8M10 3v8L6 7z', 'M10 3v8L5 7z', 'M4 3v8l5-4z', 'M10 3v8M4 3v8l4-4z'].map((d) => (
          <button key={d} type="button" aria-label="布局切换" className="w-3.5">
            <svg viewBox="0 0 14 14" className="h-3.5 w-[13px]"><path d={d} fill="#555" stroke="#555" strokeWidth=".8" /></svg>
          </button>
        ))}
      </div>
      <button
        type="button"
        className="ml-px h-3.5 w-[46px] bg-black pr-1 text-[12px] leading-[14px] text-white [clip-path:polygon(0_0,100%_0,88%_100%,14%_100%)]"
      >
        模型
      </button>
      <button type="button" className="mx-0.5 text-[12px] leading-[14px]">布局1</button>
      <span className="px-1"><Slash /></span>
      <button type="button" className="text-[12px] leading-[14px]">布局2</button>
      <span className="px-1"><Slash /></span>
      <div className="flex-1" />
      <div className="flex h-4 w-[430px] items-center">
        <div className="h-3 w-[5px] rounded-[1px] border border-[#999] bg-white" />
        <Arrow dir="left" />
        <div className="flex flex-1 justify-center pl-2">
          <div className={clsx('h-3.5 w-[15px]', thumb)} />
        </div>
        <Arrow dir="right" />
      </div>
      <div className="w-[17px]" />
    </div>
  );
}

function CommandWindow() {
  const latin = 'font-["Liberation_Mono",monospace] text-[13px]';
  return (
    <section className="flex h-[60px] bg-white">
      <div className="w-[15px] shrink-0 bg-[#979797] pt-1">
        <div className={clsx('h-1 w-3.5', dots)} />
      </div>
      <div className="flex min-w-0 flex-1 flex-col">
        <div className="flex h-10 border-b border-[#999]">
          <div className="min-w-0 flex-1 pl-[3px] text-[15px] leading-4 whitespace-nowrap text-black">
            <p className="h-4">
              自动保存到<span className={latin}> C:\Users\john\appdata\local\temp\</span>绿化施工图
              <span className={latin}>0422_1_33_9169.sv$ ...</span>
            </p>
            <p className="h-4">命令<span className={latin}>:</span></p>
          </div>
          <div className="flex w-4 flex-col justify-between bg-[#f0f0f0]">
            <Arrow dir="up" className="size-4 border border-[#5b94b8] bg-[#bfe2f6]" />
            <Arrow dir="down" className="size-4 border border-[#aaa] bg-[#e2e2e2]" />
          </div>
        </div>
        <div className="flex h-[19px] items-center">
          <label htmlFor="cmd" className="pl-[19px] text-[15px] leading-4">令<span className={latin}>:</span></label>
          <input id="cmd" className="min-w-0 flex-1 px-1 text-[13px] outline-none" />
          <div className="flex h-full w-[84px] items-center bg-[#f0f0f0]">
            <Arrow dir="left" className="h-4 w-5" />
            <div className={clsx('h-3.5 w-[15px]', thumb)} />
            <div className="flex-1" />
            <Arrow dir="right" className="mr-4 size-4" />
          </div>
        </div>
      </div>
    </section>
  );
}

const toggles = [['snap', 0], ['grid', 0], ['ortho', 0], ['polar', 1], ['osnap', 1], ['otrack', 1], ['ducs', 1], ['dyn', 1], ['lwt', 0], ['qp', 1]];

function StatusBar() {
  const flat = 'h-[21px] w-[22px] border-r border-[#6a6a6a] bg-gradient-to-b from-[#c4c4c4] to-[#9a9a9a]';
  return (
    <footer className="flex h-[22px] items-center border-t border-black bg-gradient-to-b from-[#777] via-[#8a8a8a] to-[#9a9a9a]">
      <div className='w-44 shrink-0 pl-[11px] font-["Liberation_Mono",monospace] text-[10px] whitespace-nowrap text-black'>
        -1.368, -0.655, 0.000
      </div>
      <div className="flex border-l border-[#555]">
        {toggles.map(([n, on]) => (
          <Tool
            key={n}
            name={n}
            icon="size-4"
            className={clsx(
              'h-[21px] w-[22px] border-r border-[#555] bg-gradient-to-b',
              on ? 'from-[#e6f5fa] to-[#93c6d8]' : 'from-[#c9c9c9] to-[#a0a0a0]'
            )}
          />
        ))}
      </div>
      <div className="flex-1" />
      <div className="flex w-[559px] shrink-0 items-center">
        <button type="button" className="h-[21px] w-[31px] shrink-0 border-r border-[#6a6a6a] bg-gradient-to-b from-[#c4c4c4] to-[#9a9a9a] text-[12px] text-black">模型</button>
        <Tool name="paper" icon="size-4" className={flat} />
        <Tool name="views" icon="size-4" className={flat} />
        <div className="w-[18px]" />
        <Tool name="pan" className={flat} />
        <Tool name="zoom" className={flat} />
        <Tool name="wheel" className={flat} />
        <Tool name="motion" icon="size-4" className={flat} />
        <div className="w-[19px]" />
        <button
          type="button"
          className='flex h-[21px] w-[52px] shrink-0 items-center justify-center gap-0.5 bg-gradient-to-b from-[#c4c4c4] to-[#9a9a9a] font-["Liberation_Mono",monospace] text-[10px]'
        >
          <Icon name="anno" className="size-4" />1:1<Caret />
        </button>
        <Tool name="annobulb" className={flat} />
        <Tool name="annoauto" className={flat} />
        <div className="w-1" />
        <button
          type="button"
          className='flex h-[21px] shrink-0 items-center gap-1 bg-gradient-to-b from-[#c4c4c4] to-[#9a9a9a] px-0.5 font-["Liberation_Mono","Noto_Sans_CJK_SC",monospace] text-[10px] whitespace-nowrap'
        >
          <Icon name="gear" />AutoCAD <span className="text-[12px]">经</span>
        </button>
        <div className="w-6" />
        <Tool name="unlock" className={flat} />
        <div className="h-[21px] flex-1 bg-gradient-to-b from-[#b0b0b0] to-[#9a9a9a]" />
        <Tool name="views" className={flat} />
        <Tool name="motion" className={flat} />
      </div>
    </footer>
  );
}

// floating Sogou input bar
function ImeBar() {
  return (
    <div className="absolute right-0 bottom-0 flex h-[23px] w-[172px] items-center justify-between rounded-l-[3px] bg-[#fbfdff] pr-1 pl-[22px] text-[#1c6cc0]">
      <svg viewBox="0 0 26 26" className="absolute bottom-0 -left-2.5 size-[26px]">
        <path d="M3 3l20-3 4 21-21 5z" fill="#ee4a1b" />
        <path d="M20 6.500C14 4 8 6 9 9.500s11 2.500 11 6.500-7 5-12 3" fill="none" stroke="#fff" strokeWidth="3.500" />
      </svg>
      <span className="text-[15px] leading-5 font-bold">英</span>
      <svg viewBox="0 0 16 16" className="size-3.5"><path d="M11 1c6 8-2 17-10 12 7 0 11-5 10-12z" fill="currentColor" /></svg>
      <svg viewBox="0 0 16 16" className="size-3.5"><circle cx="5" cy="6" r="2" fill="currentColor" /><path d="M11 9c3 0 3 4-1 6 1-2 1-3 0-4z" fill="currentColor" /></svg>
      <svg viewBox="0 0 16 16" className="size-4" fill="none" stroke="currentColor" strokeWidth="1.500">
        <path d="M.8 2.800h14.400v10.400H.8z" />
        <path d="M3 5.500h10M3 8h10" strokeDasharray="1.500 1" />
        <path d="M4 11h8" />
      </svg>
      <svg viewBox="0 0 16 16" className="size-4"><circle cx="7" cy="3.500" r="3" fill="#a9bcd4" /><path d="M2 14c0-8 10-8 10 0z" fill="#a9bcd4" /><path d="M8.500 8.500h6v6h-6zM11 11h1.500" fill="#fff" stroke="#8ba2c0" /></svg>
      <svg viewBox="0 0 16 16" className="size-4"><path d="M5 1c2 2 4 2 6 0l5 3-2 4-2-1v8H4V7L2 8 0 4z" fill="currentColor" /></svg>
      <svg viewBox="0 0 16 16" className="size-4"><path d="M1 13l7-7c-1-3 1-6 5-5l-3 3 2 2 3-3c1 4-2 6-5 5l-7 7z" fill="currentColor" /></svg>
    </div>
  );
}

export default function App() {
  return (
    <div className='relative flex min-h-screen flex-col overflow-hidden bg-[#f8fdff] pr-2 pl-2 font-["Open_Sans","Noto_Sans_CJK_SC",sans-serif]'>
      <Header />
      <div className="flex flex-1 flex-col bg-[#666]">
        <Toolbars />
        <main className="flex flex-1 gap-[3px] pb-[3px]">
          <div className="flex flex-col">
            <SideBar tools={drawTools} />
          </div>
          <div className="flex min-w-0 flex-1 flex-col border-t-2 border-r-2 border-b border-l-2 border-t-[#9a9a9a] border-r-[#f8f8f8] border-b-white border-l-[#9a9a9a]">
            <div className="flex flex-1">
              <div className="relative min-h-[507px] min-w-0 flex-1 overflow-hidden bg-black">
                <Drawing />
              </div>
              <div className="flex w-[17px] flex-col items-center bg-[#f0f0f0]">
                <Arrow dir="up" />
                <div className="flex flex-1 items-center">
                  <div className={clsx('h-[15px] w-[15px]', thumb)} />
                </div>
                <Arrow dir="down" />
              </div>
            </div>
            <SheetTabs />
          </div>
          <div className="mr-[3px] flex flex-col gap-px">
            <SideBar tools={modifyTools} />
            <SideBar tools={orderTools} />
          </div>
        </main>
        <CommandWindow />
        <StatusBar />
      </div>
      <div className="h-2 shrink-0 bg-[#eefaff]" />

      {/* desktop gadgets that float over the window */}
      <div className="absolute top-[500px] -left-7 size-[35px] rounded-full border border-[#c26a05] bg-[#ff9a1f]" />
      <div className="absolute top-[660px] left-0 h-[58px] w-[7px] rounded-r-[3px] bg-[#444]">
        <div className="mt-4 ml-0.5 h-10 w-0.5 bg-gradient-to-b from-[#ff5a2a] via-[#ffd42a] to-[#3be03b]" />
      </div>
      <div className="absolute top-[672px] left-2.5 flex h-6 w-8 items-center justify-center text-[11px] font-bold text-white italic">
        <svg viewBox="0 0 32 24" className="absolute inset-0 h-6 w-8">
          <path d="M0 12C6 8 10 0 20 0a12 12 0 0 1 0 24C10 24 6 16 0 12z" fill="#f78a12" stroke="#b96a1a" strokeWidth=".8" />
        </svg>
        <span className="relative">73%</span>
      </div>
      <div className="absolute top-[200px] right-0 h-[272px] w-[5px] bg-[#bcd6f0]" />
      <ImeBar />
    </div>
  );
}
